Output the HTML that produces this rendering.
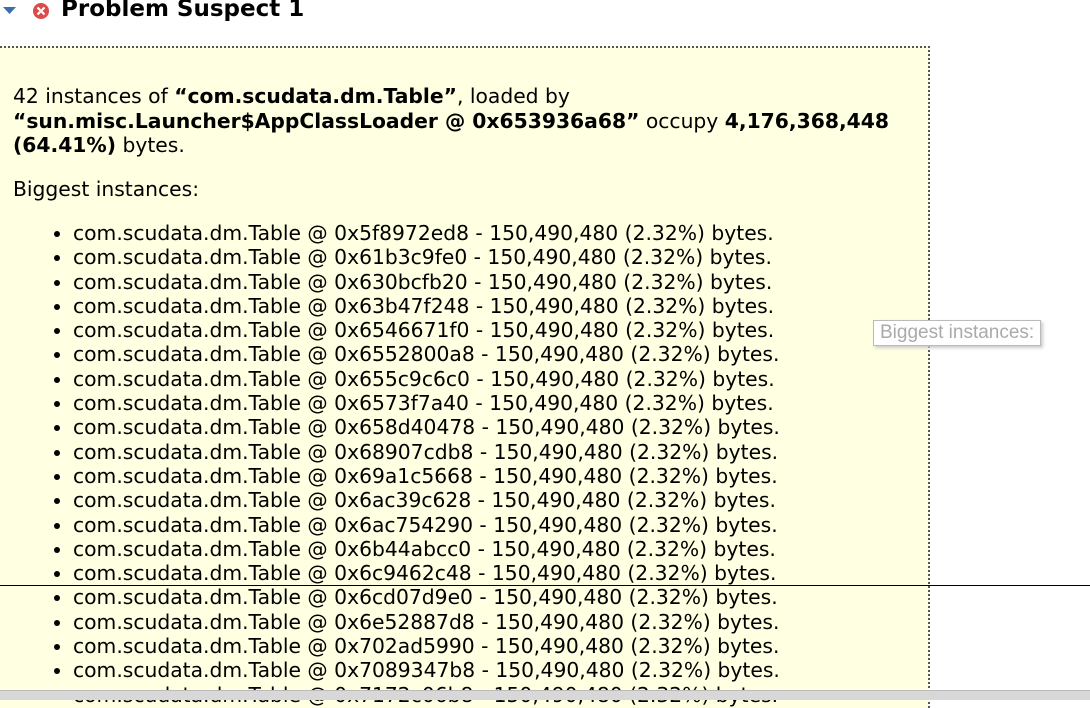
<!DOCTYPE html>
<html><head><style>
body{margin:0;width:1090px;height:699px;overflow:hidden;background:#fff;font-family:"DejaVu Sans","Liberation Sans",sans-serif;position:relative;color:#000}
.title{position:absolute;left:61px;top:-4px;font-weight:bold;font-size:23px;}
.box{position:absolute;left:0;top:46px;width:928px;height:660px;background:#ffffe1;border-top:2px dotted #555;border-right:2px dotted #555;}
.p{position:absolute;left:13px;top:84px;font-size:20.3px;line-height:24.5px;width:880px}
ul{position:absolute;left:48px;top:221px;margin:0;padding:0 0 0 25px;font-size:20.3px;line-height:24.3px}
.hl{position:absolute;left:0;top:585px;width:1090px;height:1px;background:#000}
.bar{position:absolute;left:0;top:690px;width:1090px;height:9px;background:#d8d8d8;border-top:1px solid #bbb}
.tip{position:absolute;left:873px;top:320px;border:1px solid #bbb;background:#fff;color:#aaa;font-size:19px;padding:1px 6px;box-shadow:2px 2px 3px #ccc;font-family:"Liberation Sans",sans-serif}
</style></head><body>
<svg style="position:absolute;left:3px;top:6px" width="14" height="10"><path d="M0 1H13L6.5 8Z" fill="#3a6ea8"/></svg>
<svg style="position:absolute;left:32px;top:2px" width="18" height="18"><circle cx="9" cy="9" r="8" fill="#dd4a4a"/><path d="M5.5 5.5L12.5 12.5M12.5 5.5L5.5 12.5" stroke="#fff" stroke-width="2.2"/></svg>
<div class="title">Problem Suspect 1</div>
<div class="box"></div>
<div class="p">42 instances of <b>“com.scudata.dm.Table”</b>, loaded by<br><b>“sun.misc.Launcher$AppClassLoader @ 0x653936a68”</b> occupy <b>4,176,368,448</b><br><b>(64.41%)</b> bytes.<div style="margin-top:19px">Biggest instances:</div></div>
<ul>
<li>com.scudata.dm.Table @ 0x5f8972ed8 - 150,490,480 (2.32%) bytes.</li>
<li>com.scudata.dm.Table @ 0x61b3c9fe0 - 150,490,480 (2.32%) bytes.</li>
<li>com.scudata.dm.Table @ 0x630bcfb20 - 150,490,480 (2.32%) bytes.</li>
<li>com.scudata.dm.Table @ 0x63b47f248 - 150,490,480 (2.32%) bytes.</li>
<li>com.scudata.dm.Table @ 0x6546671f0 - 150,490,480 (2.32%) bytes.</li>
<li>com.scudata.dm.Table @ 0x6552800a8 - 150,490,480 (2.32%) bytes.</li>
<li>com.scudata.dm.Table @ 0x655c9c6c0 - 150,490,480 (2.32%) bytes.</li>
<li>com.scudata.dm.Table @ 0x6573f7a40 - 150,490,480 (2.32%) bytes.</li>
<li>com.scudata.dm.Table @ 0x658d40478 - 150,490,480 (2.32%) bytes.</li>
<li>com.scudata.dm.Table @ 0x68907cdb8 - 150,490,480 (2.32%) bytes.</li>
<li>com.scudata.dm.Table @ 0x69a1c5668 - 150,490,480 (2.32%) bytes.</li>
<li>com.scudata.dm.Table @ 0x6ac39c628 - 150,490,480 (2.32%) bytes.</li>
<li>com.scudata.dm.Table @ 0x6ac754290 - 150,490,480 (2.32%) bytes.</li>
<li>com.scudata.dm.Table @ 0x6b44abcc0 - 150,490,480 (2.32%) bytes.</li>
<li>com.scudata.dm.Table @ 0x6c9462c48 - 150,490,480 (2.32%) bytes.</li>
<li>com.scudata.dm.Table @ 0x6cd07d9e0 - 150,490,480 (2.32%) bytes.</li>
<li>com.scudata.dm.Table @ 0x6e52887d8 - 150,490,480 (2.32%) bytes.</li>
<li>com.scudata.dm.Table @ 0x702ad5990 - 150,490,480 (2.32%) bytes.</li>
<li>com.scudata.dm.Table @ 0x7089347b8 - 150,490,480 (2.32%) bytes.</li>
<li>com.scudata.dm.Table @ 0x7172c06b8 - 150,490,480 (2.32%) bytes.</li>
</ul>
<div class="hl"></div>
<div class="tip">Biggest instances:</div>
<div class="bar"></div>
</body></html>
